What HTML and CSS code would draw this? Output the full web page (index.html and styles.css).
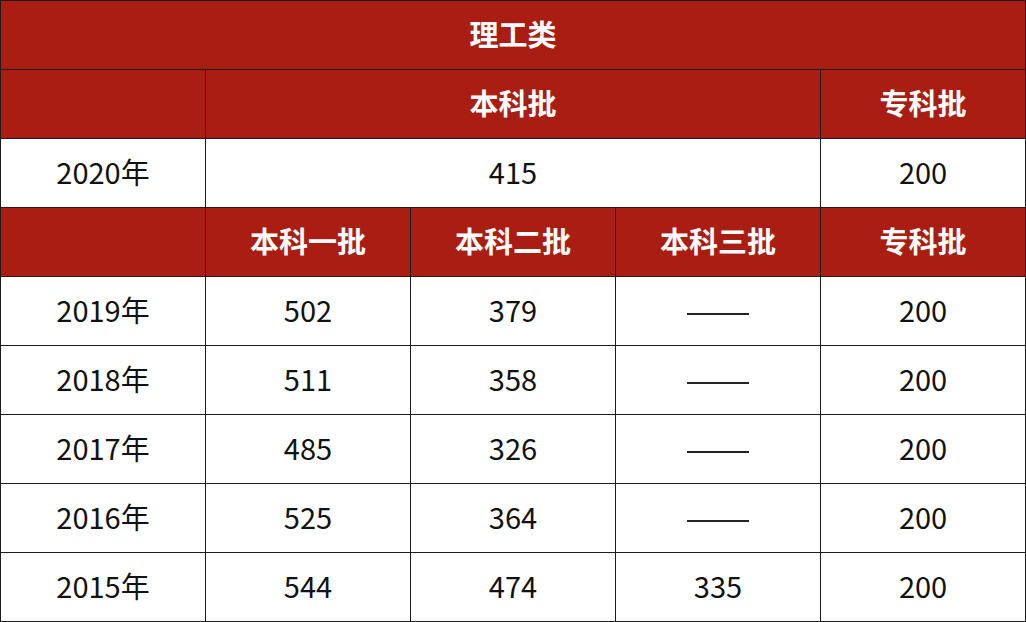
FILE: index.html
```html
<!DOCTYPE html>
<html lang="zh">
<head>
<meta charset="utf-8">
<link rel="stylesheet" href="styles.css">
</head>
<body>
<table class="score">
  <colgroup>
    <col class="c"><col class="c"><col class="c"><col class="c"><col class="c">
  </colgroup>
  <tr class="head"><td colspan="5">理工类</td></tr>
  <tr class="head"><td></td><td colspan="3">本科批</td><td>专科批</td></tr>
  <tr><td>2020年</td><td colspan="3">415</td><td>200</td></tr>
  <tr class="head"><td></td><td>本科一批</td><td>本科二批</td><td>本科三批</td><td>专科批</td></tr>
  <tr><td>2019年</td><td>502</td><td>379</td><td><span class="dash"></span></td><td>200</td></tr>
  <tr><td>2018年</td><td>511</td><td>358</td><td><span class="dash"></span></td><td>200</td></tr>
  <tr><td>2017年</td><td>485</td><td>326</td><td><span class="dash"></span></td><td>200</td></tr>
  <tr><td>2016年</td><td>525</td><td>364</td><td><span class="dash"></span></td><td>200</td></tr>
  <tr><td>2015年</td><td>544</td><td>474</td><td>335</td><td>200</td></tr>
</table>
</body>
</html>
```
FILE: styles.css
```css
html, body {
  margin: 0;
  padding: 0;
  background: #ffffff;
}
.score {
  border-collapse: collapse;
  table-layout: fixed;
  width: 1026px;
  font-family: "Noto Sans CJK SC", "Noto Sans", sans-serif;
  font-size: 29px;
  color: #111;
}
.score .c { width: 205px; }
.score td {
  border: 1px solid #1c1c1c;
  height: 64px;
  padding: 0 0 4px 0;
  text-align: center;
  vertical-align: middle;
  line-height: 1;
}
.score .head td {
  background: #a91d12;
  color: #ffffff;
  font-weight: 700;
}
.dash {
  display: inline-block;
  width: 62px;
  height: 2px;
  background: #222;
  vertical-align: middle;
}
```
